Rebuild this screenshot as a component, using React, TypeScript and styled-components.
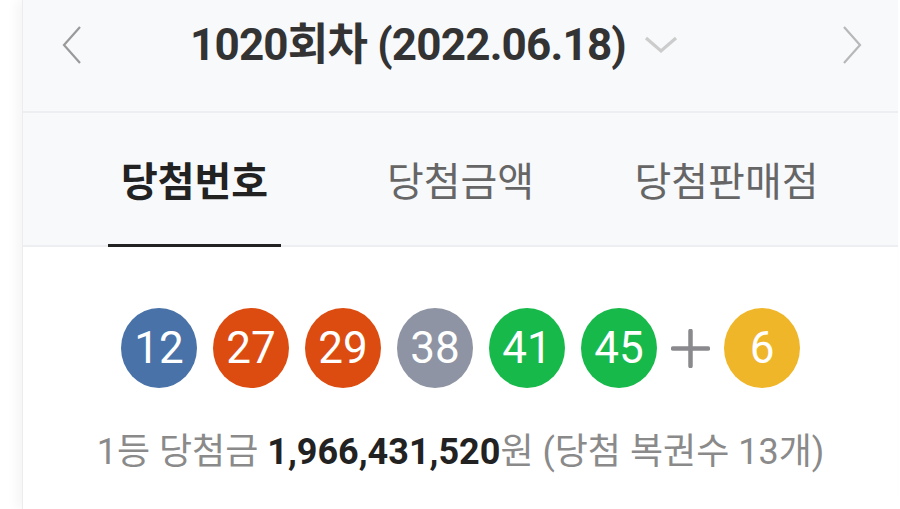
// Required packages.
import styled, { createGlobalStyle } from "styled-components";

// Draw data.
const NUMBERS = [12, 27, 29, 38, 41, 45];
const BONUS = 6;
const TABS = ["당첨번호", "당첨금액", "당첨판매점"];

// Pick the ball colour from the number range.
const ballColor = (n: number) => {
  if (n <= 10) return "#f0b62a";
  if (n <= 20) return "#4872a8";
  if (n <= 30) return "#dc4c10";
  if (n <= 40) return "#8e94a3";
  return "#18b94b";
};

const App = () => {
  return (
    <Page>
      <GlobalStyle />
      <Card>
        <Header>
          <ArrowButton aria-label="이전 회차">
            <svg width="20" height="38" viewBox="0 0 20 38">
              <polyline points="18,1 2,19 18,37" fill="none" stroke="#9a9a9a" strokeWidth="2.2" />
            </svg>
          </ArrowButton>
          <TitleGroup>
            <Title>1020회차 (2022.06.18)</Title>
            <svg width="34" height="18" viewBox="0 0 34 18">
              <polyline points="2,2 17,15 32,2" fill="none" stroke="#cccccc" strokeWidth="3.2" />
            </svg>
          </TitleGroup>
          <ArrowButton aria-label="다음 회차">
            <svg width="20" height="38" viewBox="0 0 20 38">
              <polyline points="2,1 18,19 2,37" fill="none" stroke="#b8b8b8" strokeWidth="2.2" />
            </svg>
          </ArrowButton>
        </Header>

        {/* Tab bar with the first tab selected. */}
        <TabBar>
          {TABS.map((tab, i) => (
            <Tab key={tab}>
              <TabLabel active={i === 0}>{tab}</TabLabel>
            </Tab>
          ))}
        </TabBar>

        <Body>
          <Balls>
            {NUMBERS.map((n) => (
              <Ball key={n} color={ballColor(n)}>
                {n}
              </Ball>
            ))}
            <Plus>
              <svg width="39" height="39" viewBox="0 0 39 39">
                <line x1="19.5" y1="2" x2="19.5" y2="37" stroke="#8a8a8e" strokeWidth="4.5" strokeLinecap="round" />
                <line x1="2" y1="19.5" x2="37" y2="19.5" stroke="#8a8a8e" strokeWidth="4.5" strokeLinecap="round" />
              </svg>
            </Plus>
            <Ball color={ballColor(BONUS)}>{BONUS}</Ball>
          </Balls>
          <Prize>
            1등 당첨금 <strong>1,966,431,520</strong>원 (당첨 복권수 13개)
          </Prize>
        </Body>
      </Card>
    </Page>
  );
};

// Styled components.
const GlobalStyle = createGlobalStyle`
  body {
    background: #ffffff;
    font-family: Roboto, "Noto Sans CJK KR", "Noto Sans", sans-serif;
    margin: 0;
  }
`;

const Page = styled.div`
  height: 509px;
  overflow: hidden;
  padding: 0 2px 0 22px;
`;

const Card = styled.div`
  background: #ffffff;
  border-left: 1px solid #ececec;
  box-shadow: -6px 0 10px rgba(0, 0, 0, 0.04);
  min-height: 509px;
`;

const Header = styled.div`
  align-items: center;
  background: #f8f9fb;
  border-bottom: 2px solid #eceef1;
  box-sizing: border-box;
  display: flex;
  height: 113px;
  padding: 0 36px 21px 39px;
`;

const ArrowButton = styled.button`
  background: none;
  border: 0;
  display: flex;
  padding: 0;
`;

const TitleGroup = styled.div`
  align-items: center;
  display: flex;
  flex: 1;
  gap: 18px;
  justify-content: center;
  padding-right: 56px;
`;

const Title = styled.h1`
  color: #333333;
  font-size: 44px;
  font-weight: 700;
  letter-spacing: -0.8px;
  line-height: 1;
  margin: 0;
`;

const TabBar = styled.div`
  background: #f8f9fb;
  box-shadow: inset 0 -2px 0 #eceef1;
  display: flex;
  height: 134px;
  justify-content: center;
`;

const Tab = styled.div`
  display: flex;
  justify-content: center;
  width: 266px;
`;

const TabLabel = styled.span<{ active?: boolean }>`
  align-items: center;
  border-bottom: 3px solid ${(props) => (props.active ? "#222222" : "transparent")};
  color: ${(props) => (props.active ? "#222222" : "#666666")};
  display: flex;
  font-size: 40px;
  font-weight: ${(props) => (props.active ? 700 : 400)};
  padding: 0 13px;
`;

const Body = styled.div`
  align-items: center;
  display: flex;
  flex-direction: column;
  padding-top: 61px;
`;

const Balls = styled.div`
  align-items: center;
  display: flex;
  gap: 16px;
`;

const Ball = styled.div<{ color: string }>`
  align-items: center;
  background: ${(props) => props.color};
  border-radius: 50%;
  color: #ffffff;
  display: flex;
  font-size: 44px;
  height: 80px;
  justify-content: center;
  width: 76px;
`;

const Plus = styled.div`
  display: flex;
  margin: 0 -2px;
`;

const Prize = styled.p`
  color: #8a8a8a;
  font-size: 36px;
  line-height: 42px;
  margin: 43px 0 0;

  & strong {
    color: #222222;
    font-weight: 700;
  }
`;

export default App;
